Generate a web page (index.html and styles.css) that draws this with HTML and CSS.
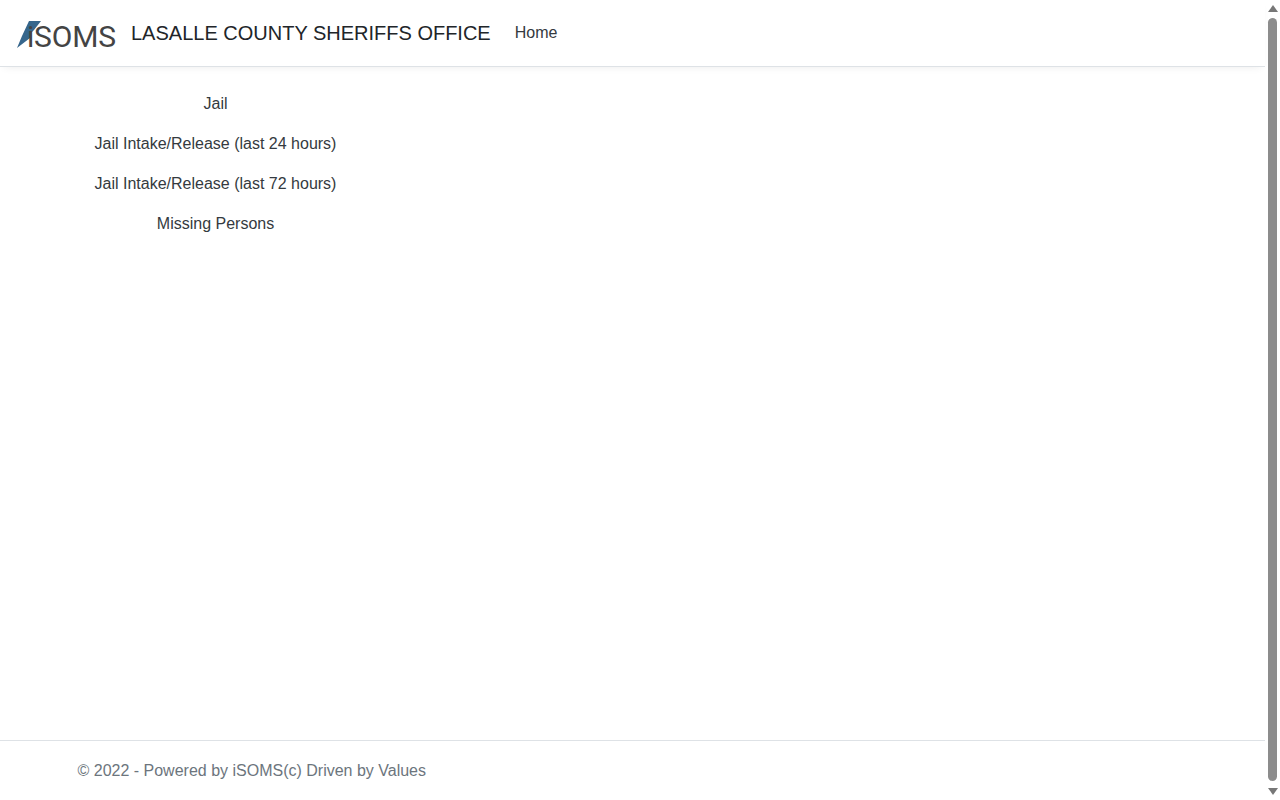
FILE: index.html
```html
<!DOCTYPE html>
<html lang="en">
<head>
  <meta charset="UTF-8">
  <title>iSOMS</title>
  <link rel="stylesheet" href="styles.css">
</head>
<body>
  <div class="page">
    <header class="navbar">
      <a class="logo" href="#">
        <svg class="logo-bolt" width="26" height="29" viewBox="0 0 26 29">
          <path d="M13 1 H25 L18 10 L15 13 L14 18 L1 28 L6 16 Z" fill="#36668c"/>
        </svg>
        <span class="logo-text">iSOMS</span>
      </a>
      <a class="brand" href="#">LASALLE COUNTY SHERIFFS OFFICE</a>
      <a class="nav-link" href="#">Home</a>
    </header>

    <main class="container">
      <ul class="report-list">
        <li><a href="#">Jail</a></li>
        <li><a href="#">Jail Intake/Release (last 24 hours)</a></li>
        <li><a href="#">Jail Intake/Release (last 72 hours)</a></li>
        <li><a href="#">Missing Persons</a></li>
      </ul>
    </main>

    <footer class="footer">
      <div class="footer-inner">© 2022 - Powered by iSOMS(c) Driven by Values</div>
    </footer>
  </div>

  <div class="scrollbar">
    <span class="arrow-up"></span>
    <span class="thumb"></span>
    <span class="arrow-down"></span>
  </div>
</body>
</html>
```

FILE: styles.css
```css
body {
  font-family: "Liberation Sans", Arial, sans-serif;
  font-size: 16px;
  line-height: 24px;
  color: #343a40;
  background-color: #fff;
  margin: 0;
  height: 800px;
  overflow: hidden;
  display: flex;
}
a {
  color: inherit;
  text-decoration: none;
}
.page {
  flex: 1;
  min-width: 0;
  display: flex;
  flex-direction: column;
}
.navbar {
  display: flex;
  align-items: center;
  height: 66px;
  padding: 0 16px;
  border-bottom: 1px solid #dee2e6;
  box-shadow: 0 4px 8px -4px rgba(0,0,0,0.08);
}
.logo {
  position: relative;
  display: block;
  width: 100px;
  height: 36px;
  margin-right: 15px;
  margin-top: 4px;
}
.logo-bolt {
  position: absolute;
  left: 0;
  top: 3px;
}
.logo-text {
  position: absolute;
  left: 11px;
  top: 2px;
  font-family: Roboto, sans-serif;
  font-size: 30px;
  line-height: 36px;
  letter-spacing: -0.2px;
  color: #444;
}
.brand {
  font-size: 20px;
  line-height: 30px;
  margin-right: 24px;
  color: #212529;
}
.container {
  flex: 1;
  box-sizing: border-box;
  width: 1140px;
  margin: 0 auto;
  padding: 25px 15px 0;
}
.report-list {
  list-style: none;
  margin: 0;
  padding: 0;
  width: 276px;
  text-align: center;
}
.report-list li {
  margin-bottom: 16px;
}
.footer {
  height: 59px;
  line-height: 59px;
  border-top: 1px solid #dee2e6;
  color: #6c757d;
}
.footer-inner {
  box-sizing: border-box;
  width: 1140px;
  margin: 0 auto;
  padding: 0 15px;
}
.scrollbar {
  width: 15px;
  flex-shrink: 0;
  display: flex;
  flex-direction: column;
  align-items: center;
  padding: 5px 0;
  box-sizing: border-box;
}
.arrow-up,
.arrow-down {
  width: 0;
  height: 0;
  border-left: 5px solid transparent;
  border-right: 5px solid transparent;
}
.arrow-up {
  border-bottom: 7px solid #777;
}
.arrow-down {
  border-top: 7px solid #777;
}
.thumb {
  flex: 1;
  width: 9px;
  margin: 6px 0 7px;
  border-radius: 5px;
  background: #8c8c8c;
}
```
